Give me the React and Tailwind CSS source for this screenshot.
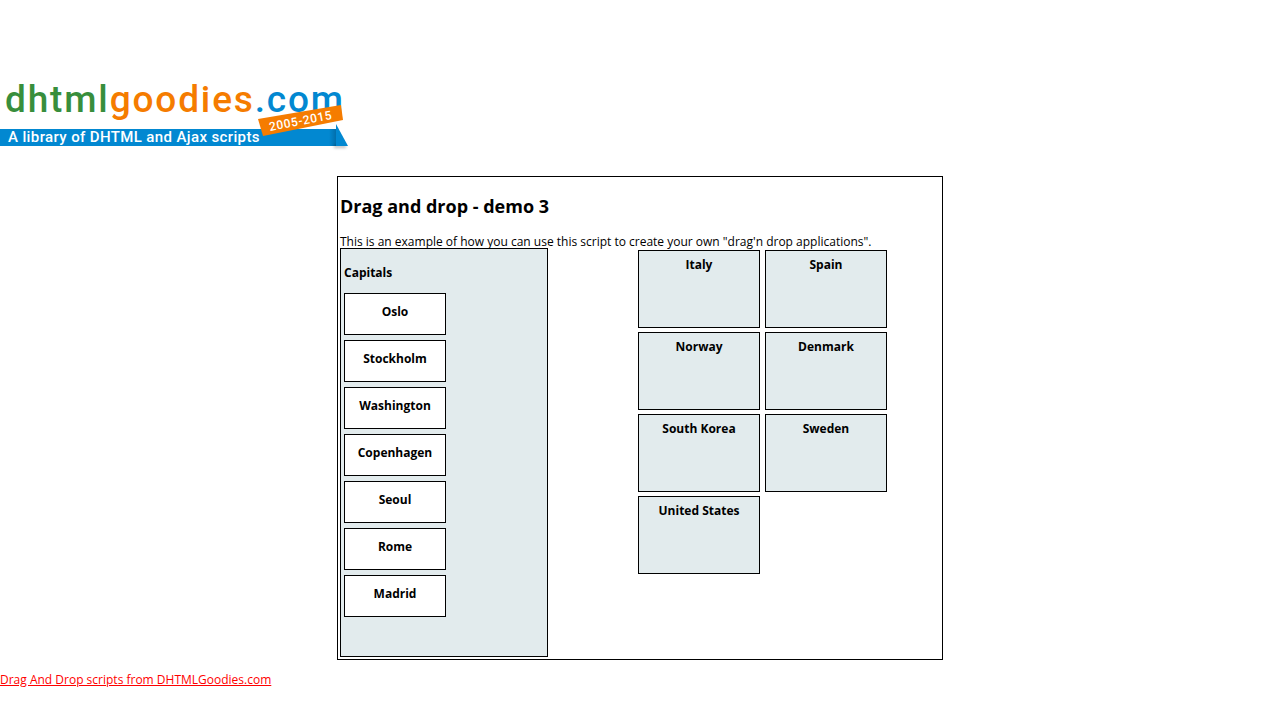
const capitals = ['Oslo', 'Stockholm', 'Washington', 'Copenhagen', 'Seoul', 'Rome', 'Madrid'];

const countries = ['Italy', 'Spain', 'Norway', 'Denmark', 'South Korea', 'Sweden', 'United States'];

function Logo() {
  return (
    <svg
      className="block h-[76px] w-[360px]"
      viewBox="0 0 360 76"
      role="img"
      aria-label="dhtmlgoodies.com"
      fontFamily="Roboto, sans-serif"
    >
      <defs>
        <linearGradient id="fold" x1="0" x2="1">
          <stop offset="0" stopColor="#0288d1" />
          <stop offset="1" stopColor="#026eab" />
        </linearGradient>
        <filter id="soft" x="-50%" y="-100%" width="200%" height="300%">
          <feGaussianBlur stdDeviation="1.5" />
        </filter>
      </defs>
      <text x="5" y="34" fontSize="37" fontWeight="500" className="tracking-wider">
        <tspan fill="#388e3c">dhtml</tspan>
        <tspan fill="#f57c00">goodies</tspan>
        <tspan fill="#0288d1">.com</tspan>
      </text>
      <path d="M0 51H336V68H0Z" fill="#0288d1" />
      <path d="M329 51H336V68H329Z" fill="url(#fold)" />
      <path d="M334 67H346V70H334Z" fill="#000" opacity="0.25" filter="url(#soft)" />
      <path d="M336 46L348 68H336Z" fill="#0288d1" />
      <text x="8" y="64" fontSize="15" fontWeight="500" fill="#fff" className="tracking-wide">
        A library of DHTML and Ajax scripts
      </text>
      <path d="M258 41L341 27L343 42L263 58Z" fill="#f57c00" />
      <text
        x="270"
        y="53"
        fontSize="12"
        fontWeight="500"
        fill="#fff"
        className="tracking-wider"
        transform="rotate(-11 270 53)"
      >
        2005-2015
      </text>
    </svg>
  );
}

function Capital({ name }) {
  return (
    <li className="flex h-[42px] w-[102px] cursor-move justify-center border border-black bg-white pt-2 font-bold">
      {name}
    </li>
  );
}

function Country({ name }) {
  return (
    <li className="flex h-[78px] justify-center border border-black bg-[#e2ebed] pt-1 font-bold">
      {name}
    </li>
  );
}

export default function App() {
  return (
    <div className="bg-white pb-6 font-['Trebuchet_MS','Open_Sans',sans-serif] text-[12px] leading-5 text-black">
      <header className="pt-[78px] pb-[22px]">
        <Logo />
      </header>
      <main className="mx-auto w-full max-w-[606px] border border-black p-0.5 pt-[15px]">
        <h1 className="text-[18px] leading-7 font-bold">Drag and drop - demo 3</h1>
        <p className="relative pt-3">
          This is an example of how you can use this script to create your own "drag'n drop applications".
        </p>
        <div className="-mt-1 flex items-start justify-between">
          <section className="min-h-[409px] w-[208px] border border-black bg-[#e2ebed] px-[3px] pt-3.5">
            <h2 className="font-bold">Capitals</h2>
            <ul className="flex flex-col gap-[5px] pt-2.5">
              {capitals.map((name) => (
                <Capital key={name} name={name} />
              ))}
            </ul>
          </section>
          <ul className="mt-0.5 mr-[53px] grid grid-cols-[122px_122px] gap-x-[5px] gap-y-1">
            {countries.map((name) => (
              <Country key={name} name={name} />
            ))}
          </ul>
        </div>
      </main>
      <footer className="pt-2.5">
        <a href="#scripts" className="text-[#ff0000] underline">
          Drag And Drop scripts from DHTMLGoodies.com
        </a>
      </footer>
    </div>
  );
}
